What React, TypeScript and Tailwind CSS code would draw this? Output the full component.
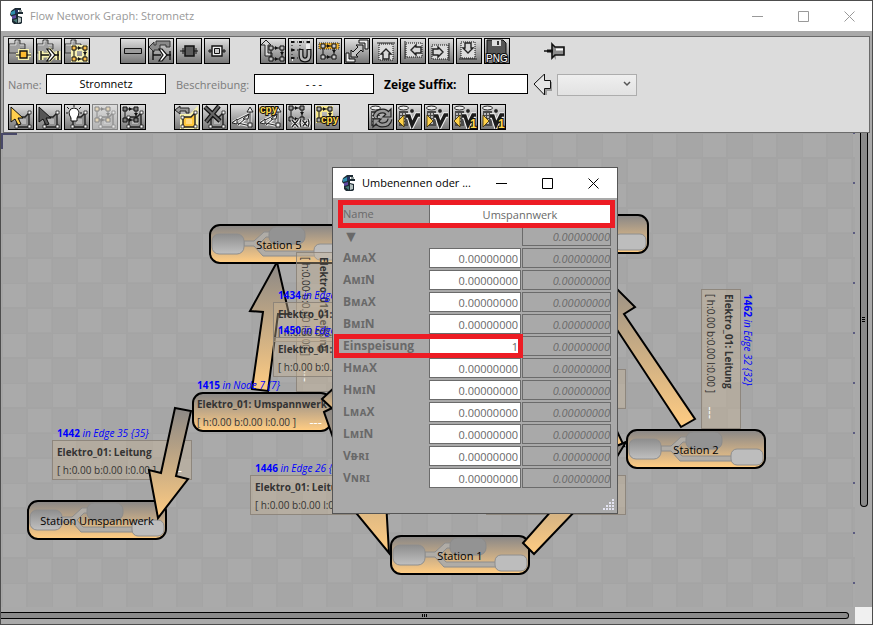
import React from "react";

const ink = "#111";

/* ---------- toolbar glyph parts ---------- */

function Pipe() {
  return (
    <g>
      <path d="M1 6h6V2h5v4h5v5h-5v4H1z" fill="#a0a0a0" stroke="#3c3c3c" />
      <path d="M2 7h6V3h2M12 7h4" fill="none" stroke="#d8d8d8" />
    </g>
  );
}

function Junction({ halo = "none" }: { halo?: string }) {
  const arms = "M5 13v9M5 17h8M18 17h5M22 13v9";
  return (
    <g fill="none">
      <path d={`${arms}M12 11l6 6l-6 6`} stroke={halo} strokeWidth="5" />
      <path d={arms} stroke={ink} strokeWidth="1.4" />
      <path d="M11 11h3l5 6l-5 6h-3l4-6z" fill="#fff" stroke={ink} strokeWidth="1.2" />
    </g>
  );
}

function Squares({ x, y, fill, line = ink, halo = "none" }: { x: number; y: number; fill: string; line?: string; halo?: string }) {
  return (
    <g transform={`translate(${x} ${y})`}>
      <path d="M2 2h11v11H2z" fill="none" stroke={halo} strokeWidth="6" />
      <path d="M2 2h11v11H2z" fill="none" stroke={line} />
      <path d="M6 0l3 2l-3 2zM11 6h4l-2 3zM6 11l3 2l-3 2z" fill={line} />
      <path d="M0 0h4v4H0zM11 0h4v4h-4zM0 11h4v4H0zM11 11h4v4h-4z" fill={fill} stroke={line} />
    </g>
  );
}

function Patch({ fill = "#8f8f8f", halo = "none" }: { fill?: string; halo?: string }) {
  return (
    <g>
      <path d="M9 13h8l4-4v14H9z" fill="none" stroke={halo} strokeWidth="6" />
      <path d="M9 13h8l4-4v14H9z" fill={fill} stroke="#222" strokeWidth="1.4" />
      <path d="M12 15h6v5h-6z" fill="#fff" opacity=".35" />
      <path d="M7 12h3v3H7zM20 7h3v3h-3zM7 21h3v3H7zM20 21h3v3h-3z" fill="#fff" stroke="#222" strokeWidth=".8" />
    </g>
  );
}

function Cursor({ fill }: { fill: string }) {
  return <path d="M3 3v15l4-3l3 6l3-1l-3-6h5z" fill={fill} stroke={ink} />;
}

function Axes() {
  return (
    <g stroke="#222">
      <path d="M20 5v16M3 18l16-8M3 18l18 4M8 21l8-7" fill="none" stroke="#eee" strokeWidth="3" />
      <path d="M20 5v16M3 18l16-8M3 18l18 4M8 21l8-7" fill="none" />
      <path d="M17 8l3-5l3 5zM18 19h4v4h-4zM2 19l5-4v5zM13 15l6-5l-1 5z" fill="#eee" />
    </g>
  );
}

function Copy({ x, y }: { x: number; y: number }) {
  return (
    <text x={x} y={y} fontFamily="Liberation Sans, sans-serif" fontSize="10" fontWeight="700" fill="#ffd94a" stroke={ink} strokeWidth="2" paintOrder="stroke">
      cpy
    </text>
  );
}

function Tower() {
  return (
    <g>
      <path d="M3 7h9v15H3z" fill="#4a4a4a" />
      <path d="M4 10h2M7 10h2M10 10h2M4 13h2M7 13h2M10 13h2M4 16h2M7 16h2M4 19h2M7 19h2" stroke="#ddd" strokeWidth="1.4" />
      <ellipse cx="7.5" cy="4" rx="5" ry="2" fill="#eee" stroke="#222" />
    </g>
  );
}

function Flow({ back = false, one = false }: { back?: boolean; one?: boolean }) {
  const vee = "M10 12h3l3 9l5-10h3";
  return (
    <g>
      <Tower />
      <path d={vee} fill="none" stroke="#f2f2f2" strokeWidth="5.5" />
      <path d={vee} fill="none" stroke="#1c1c1c" strokeWidth="3.4" />
      <circle cx="16" cy="7" r="2.4" fill="#222" stroke="#eee" strokeWidth=".8" />
      <path d={back ? "M8 11v12l-6-6z" : "M3 11v12l6-6z"} fill="#ffd24a" stroke="#3a2c00" strokeWidth=".8" />
      {one && (
        <text x="18" y="24" fontFamily="Liberation Sans, sans-serif" fontSize="12" fontWeight="700" fill="#ffd94a" stroke={ink} strokeWidth="2" paintOrder="stroke">
          1
        </text>
      )}
    </g>
  );
}

function Shift({ angle }: { angle: number }) {
  return (
    <g transform={`rotate(${angle} 13 13)`}>
      <path d="M7 6h14v16H7z" fill="#dcdcdc" stroke="#111" strokeDasharray="1 1" />
      <path d="M5 5h18" stroke="#222" />
      <path d="M14 11l5 5h-2v5h-6v-5H9z" fill="#d8d8d8" stroke="#222" strokeWidth="1.4" />
    </g>
  );
}

type Tool = { name: string; art: React.ReactNode; disabled?: boolean };

const topGroups: Tool[][] = [
  [
    {
      name: "Knoten einfügen",
      art: (
        <g>
          <Pipe />
          <path d="M8 17h15M12 13h7v7h-7z" fill="none" stroke="#f7f2b0" strokeWidth="4" />
          <path d="M8 17h15" stroke={ink} />
          <path d="M12 13h7v7h-7z" fill="#fdbb30" stroke={ink} strokeWidth="1.4" />
        </g>
      ),
    },
    { name: "Kante einfügen", art: <g><Pipe /><Junction halo="#f7f2b0" /></g> },
    { name: "Gruppe einfügen", art: <g><Pipe /><Squares x={8} y={8} fill="#fdc04a" halo="#f7f2b0" /></g> },
  ],
  [
    { name: "Leitung", art: <path d="M4.5 10.5h17v5h-17z" fill="#9c9c9c" stroke={ink} /> },
    {
      name: "Verzweigung",
      art: (
        <g>
          <path d="M1 9l5-5v3h2V3h14v6h-4V7h-6v5H6v2z" fill="#8a8a8a" stroke="#333" />
          <Junction />
        </g>
      ),
    },
    {
      name: "Station",
      art: (
        <g stroke={ink}>
          <path d="M4 13h18M7 10v6M20 10v6" />
          <path d="M9 8h9v10H9z" fill="#5c5c5c" strokeWidth="1.5" />
        </g>
      ),
    },
    {
      name: "Anschluss",
      art: (
        <g stroke={ink}>
          <path d="M4 13h18M6 11v4M20 11v4" />
          <path d="M8 8h10v10H8z" fill="#eee" strokeWidth="1.4" />
          <path d="M10.5 10.500h5v5h-5z" fill="#ccc" />
        </g>
      ),
    },
  ],
  [
    {
      name: "Anordnen",
      art: (
        <g>
          <path d="M6 2l5 5H8v8h4v3H5V7H1z" fill="#d6d6d6" stroke="#222" />
          <Squares x={9} y={8} fill="#bbb" />
        </g>
      ),
    },
    {
      name: "Am Raster ausrichten",
      art: (
        <g>
          <path d="M4 3h1M12 3h1M20 3h1M4 12h1M4 21h1M12 12h1M20 6v5" stroke="#eee" strokeWidth="4" />
          <path d="M3 4h3M11 4h3M19 4h3M3 12h3M3 20h3" stroke={ink} strokeWidth="2" />
          <path d="M6 4h14M6 12h6M4 4v16M12 4v8M6 20h6" stroke={ink} strokeDasharray="1 2" />
          <path d="M13 11v6q0 5 4 5t4-5v-6" fill="none" stroke={ink} strokeWidth="5" />
          <path d="M13 12v5q0 5 4 5t4-5v-5" fill="none" stroke="#b9b9b9" strokeWidth="2.5" />
        </g>
      ),
    },
    {
      name: "Reihe markieren",
      art: (
        <g>
          <path d="M3 5h20v6H3z" fill="#f3b32c" stroke="#222" strokeDasharray="1 1" />
          <Squares x={5} y={6} fill="#ccc" />
        </g>
      ),
    },
    {
      name: "Einpassen",
      art: (
        <g stroke={ink}>
          <path d="M15 2h9v9h-3V5h-6zM2 15v9h9v-3H5v-6z" fill="#eee" />
          <path d="M19 7v7l-2-2l-5 5l2 2H7v-7l2 2l5-5l-2-2z" fill="#c4c4c4" />
        </g>
      ),
    },
    { name: "Nach oben", art: <Shift angle={0} /> },
    { name: "Nach links", art: <Shift angle={-90} /> },
    { name: "Nach rechts", art: <Shift angle={90} /> },
    { name: "Nach unten", art: <Shift angle={180} /> },
    {
      name: "Als PNG speichern",
      art: (
        <g>
          <path d="M3 2h16l3 3v12H3z" fill="#555" stroke={ink} />
          <path d="M8 2h9v6H8z" fill="#ddd" />
          <path d="M13 3h2v4h-2z" fill="#333" />
          <text x="2" y="24" fontFamily="Liberation Sans, sans-serif" fontSize="10" fontWeight="400" fill="#fff" stroke={ink} strokeWidth="2" paintOrder="stroke">
            PNG
          </text>
        </g>
      ),
    },
  ],
];

const bottomGroups: Tool[][] = [
  [
    { name: "Auswählen", art: <g><Patch /><Cursor fill="#ffcf4d" /></g> },
    { name: "Bereich auswählen", art: <g><Patch /><Cursor fill="#555" /></g> },
    {
      name: "Hervorheben",
      art: (
        <g>
          <Patch />
          <path d="M3 3l2 2M10 1v2M17 3l-2 2M2 9h2M16 9h2" stroke={ink} />
          <path d="M7 14q-2-3-2-6q1-4 5-4t5 4q0 3-2 6v3H7z" fill="#fff" stroke={ink} />
        </g>
      ),
    },
    { name: "Gruppe auswählen", disabled: true, art: <g><Patch /><Squares x={3} y={3} fill="#eecb85" /></g> },
    { name: "Gruppe auflösen", art: <g><Patch /><Squares x={3} y={3} fill="#777" /></g> },
  ],
  [
    {
      name: "Eigenschaften",
      art: (
        <g>
          <Patch fill="#ffc83c" halo="#f7f2b0" />
          <path d="M1 6l5-4v2h9v5h-3V7H6v3z" fill="#999" stroke="#222" />
        </g>
      ),
    },
    {
      name: "Löschen",
      art: (
        <g>
          <Patch />
          <path d="M3 3l15 14M17 2L4 18" stroke={ink} strokeWidth="4.5" />
          <path d="M3 3l15 14M17 2L4 18" stroke="#666" strokeWidth="2" />
        </g>
      ),
    },
    { name: "Maße", art: <Axes /> },
    { name: "Maße kopieren", art: <g><Axes /><Copy x={2} y={9} /></g> },
    {
      name: "Variablen",
      art: (
        <g>
          <Squares x={3} y={2} fill="#999" />
          <path d="M6 16l6 7M12 16l-6 7M15 15q-2 4 0 8M22 15q2 4 0 8M17 17l4 5M21 17l-4 5" fill="none" stroke="#fff" strokeWidth="3" />
          <path d="M6 16l6 7M12 16l-6 7M15 15q-2 4 0 8M22 15q2 4 0 8M17 17l4 5M21 17l-4 5" fill="none" stroke="#222" strokeWidth="1.3" />
        </g>
      ),
    },
    { name: "Variablen kopieren", art: <g><Squares x={3} y={3} fill="#aaa" halo="#f7e98e" /><Copy x={7} y={19} /></g> },
  ],
  [
    {
      name: "Neu berechnen",
      art: (
        <g>
          <Tower />
          <path d="M7 13q1-6 8-6q3 0 5 3M22 15q-1 6-8 6q-3 0-5-3" fill="none" stroke="#222" strokeWidth="5" />
          <path d="M23 5v8h-8zM5 23v-8h8z" fill="#999" stroke="#222" strokeWidth="1.2" />
          <path d="M7 13q1-6 8-6q3 0 5 3M22 15q-1 6-8 6q-3 0-5-3" fill="none" stroke="#999" strokeWidth="2.6" />
        </g>
      ),
    },
    { name: "Fluss zurück", art: <Flow back /> },
    { name: "Fluss vor", art: <Flow /> },
    { name: "Ein Schritt zurück", art: <Flow back one /> },
    { name: "Ein Schritt vor", art: <Flow one /> },
  ],
];

function ToolGroup({ tools }: { tools: Tool[] }) {
  return (
    <div className="flex gap-[2px]">
      {tools.map((t) => (
        <button
          key={t.name}
          type="button"
          aria-label={t.name}
          disabled={t.disabled}
          className="relative size-[26px] shrink-0 overflow-hidden border border-black bg-linear-to-b from-[#dedede] to-[#777] disabled:opacity-40"
        >
          <svg viewBox="1 1 24 24" className="block size-full">
            {t.art}
          </svg>
        </button>
      ))}
    </div>
  );
}

function AppIcon() {
  return (
    <svg viewBox="0 0 14 16" className="h-4 w-[14px] shrink-0" aria-hidden="true">
      <path d="M1 3l4-3h6v2H8v2h5v2H8v2l4 1v6l-3 2H5l-3-3V9L0 7z" fill="#1c2a33" />
      <path d="M1 4l4-2v4L1 7z" fill="#2f8fae" />
      <path d="M5 2l3-1v4L5 6z" fill="#24305e" />
      <path d="M2 8l4-1v3l-4 1z" fill="#5e48a0" />
      <path d="M3 12l4-1v4z" fill="#4a7c77" />
      <path d="M8 9l3 1v4l-3 1z" fill="#b4c0c0" />
      <path d="M9 2h3v2H9z" fill="#8f9a9a" />
    </svg>
  );
}

function WindowButtons({ color }: { color: string }) {
  return (
    <div className={`flex items-center gap-[35px] ${color}`}>
      <button type="button" aria-label="Minimieren" className="size-[11px]">
        <svg viewBox="0 0 11 11" className="block size-full"><path d="M0 5.5h11" stroke="currentColor" /></svg>
      </button>
      <button type="button" aria-label="Maximieren" className="size-[11px]">
        <svg viewBox="0 0 11 11" className="block size-full"><path d="M.5.5h10v10H.5z" fill="none" stroke="currentColor" /></svg>
      </button>
      <button type="button" aria-label="Schließen" className="size-[11px]">
        <svg viewBox="0 0 11 11" className="block size-full"><path d="M.5.5l10 10M10.5.5l-10 10" stroke="currentColor" /></svg>
      </button>
    </div>
  );
}

/* ---------- graph ---------- */

const stations = [
  { name: "Station 5", x: 208, y: 91 },
  { name: "", x: 508, y: 81 },
  { name: "Station 2", x: 625, y: 296 },
  { name: "Station 1", x: 389, y: 402 },
  { name: "Station Umspannwerk", x: 26, y: 367 },
];

function StationNode({ name, x, y }: { name: string; x: number; y: number }) {
  return (
    <div
      style={{ left: x, top: y }}
      className="absolute flex h-10 w-[140px] items-center justify-center rounded-[11px] border-2 border-black bg-linear-to-b from-[#8b8886] to-[#ffcc82]"
    >
      <svg viewBox="2 2 136 36" className="absolute inset-0 size-full" aria-hidden="true">
        <defs>
          <linearGradient id="tank" x1="0" y1="0" x2="0" y2="1">
            <stop offset="0" stopColor="#8e8e8e" />
            <stop offset="1" stopColor="#c0c0c0" />
          </linearGradient>
        </defs>
        <path d="M35 17h10l10-9h7v5h-5l-7 7l6 7h50v5H54L45 22H35z" fill="#b0aca6" stroke="#8c8c8c" />
        <rect x="60" y="3" width="36" height="17" rx="7" fill="#939393" stroke="#8b8b8b" />
        <rect x="3" y="10" width="32" height="20" rx="7" fill="url(#tank)" stroke="#8e8e8e" />
        <rect x="105" y="20" width="32" height="16" rx="6" fill="#bdbdbd" stroke="#8e8e8e" />
      </svg>
      <span className="relative pt-px text-[11px] leading-4 whitespace-nowrap text-black">{name}</span>
    </div>
  );
}

type TagData = { id: string; place: string; kind: string; x: number; y: number; node?: boolean; upright?: boolean };

const tags: TagData[] = [
  { id: "", place: "", kind: "Elektro_01: Leitung", x: 295, y: 119, upright: true },
  { id: "1434", place: "in Edge 29 {29}", kind: "Elektro_01: Leitung", x: 272, y: 169 },
  { id: "1450", place: "in Edge 30 {30}", kind: "Elektro_01: Leitung", x: 272, y: 204 },
  { id: "1415", place: "in Node 7 {7}", kind: "Elektro_01: Umspannwerk", x: 191, y: 259, node: true },
  { id: "1446", place: "in Edge 26 {26}", kind: "Elektro_01: Leitung", x: 249, y: 342 },
  { id: "", place: "", kind: "Elektro_01: Leitung", x: 485, y: 342 },
  { id: "", place: "", kind: "Elektro_01: Leitung", x: 485, y: 236 },
  { id: "1462", place: "in Edge 32 {32}", kind: "Elektro_01: Leitung", x: 700, y: 156, upright: true },
];

const leaf: TagData = { id: "1442", place: "in Edge 35 {35}", kind: "Elektro_01: Leitung", x: 51, y: 307 };

function Tag({ id, place, kind, x, y, node, upright }: TagData) {
  const skin = node
    ? "rounded-[11px] border-2 border-black bg-linear-to-b from-[#8b8886] to-[#ffcc82] px-[3px]"
    : "border border-[#857d74]/80 bg-[#c8b496]/40 px-1";
  const turn = upright ? "origin-top-left translate-x-10 rotate-90" : "";
  return (
    <div style={{ left: x, top: y }} className={`absolute h-10 w-[140px] text-[10px] leading-[14px] whitespace-nowrap text-[#333] ${turn}`}>
      <div className={`flex size-full flex-col justify-center gap-1 pt-[2px] ${skin}`}>
        <b>{kind}</b>
        <div className="flex justify-between pr-[5px]">
          <span>[ h:0.00 b:0.00 l:0.00 ]</span>
          <span className="text-[13px] text-white">---</span>
        </div>
      </div>
      <div className="absolute -top-[14px] left-[5px] text-[#0000ff]">
        <b>{id}</b> <i>{place}</i>
      </div>
    </div>
  );
}

function Arrows({ paths }: { paths: string[] }) {
  return (
    <svg className="pointer-events-none absolute inset-0 size-full" aria-hidden="true">
      <defs>
        <linearGradient id="beam" x1="0" y1="0" x2="0" y2="1">
          <stop offset="0" stopColor="#8b8886" />
          <stop offset="1" stopColor="#ffcc82" />
        </linearGradient>
      </defs>
      <g transform="translate(-1 -133)" fill="url(#beam)" stroke="#000" strokeWidth="2">
        {paths.map((d) => (
          <path key={d} d={d} />
        ))}
      </g>
    </svg>
  );
}

function Grid() {
  return (
    <svg className="absolute inset-0 size-full" aria-hidden="true">
      <defs>
        <pattern id="tiles" width="50" height="50" patternUnits="userSpaceOnUse" x="1" y="0">
          <rect width="50" height="50" fill="#a6a6a6" />
          <rect x="1" y="1" width="23" height="23" fill="#aaaaaa" />
          <rect x="26" y="26" width="23" height="23" fill="#aaaaaa" />
          <path d="M0 0h50M0 25h50M0 0v50M25 0v50" stroke="#a4a4a4" strokeWidth="2" />
        </pattern>
        <pattern id="marks" width="50" height="50" patternUnits="userSpaceOnUse" x="852" y="-1">
          <rect width="2" height="2" fill="#5b5b80" />
        </pattern>
      </defs>
      <rect width="100%" height="100%" fill="url(#tiles)" />
      <rect x="852" width="2" height="100%" fill="url(#marks)" />
      <path d="M0 1h16M1 0v16" stroke="#484868" strokeWidth="2" />
    </svg>
  );
}

/* ---------- dialog ---------- */

const rows = [
  ["AᴍᴀX", "0.00000000"],
  ["AᴍɪN", "0.00000000"],
  ["BᴍᴀX", "0.00000000"],
  ["BᴍɪN", "0.00000000"],
  ["Einspeisung", "1"],
  ["HᴍᴀX", "0.00000000"],
  ["HᴍɪN", "0.00000000"],
  ["LᴍᴀX", "0.00000000"],
  ["LᴍɪN", "0.00000000"],
  ["Vᴃʀɪ", "0.00000000"],
  ["Vɴʀɪ", "0.00000000"],
];

const derived = "h-5 w-[89px] border border-[#6b6b6b] bg-transparent text-right italic text-[#6b6b6b]";

function RenameDialog() {
  return (
    <section role="dialog" aria-label="Umbenennen oder ..." className="absolute top-[166px] left-[331px] w-[286px] border border-[#555] bg-[#a9a9a9] text-[#696969]">
      <header className="flex h-[30px] items-center justify-between bg-white pr-[18px] pl-[9px] text-black">
        <div className="flex items-center gap-[6px]">
          <AppIcon />
          <h2>Umbenennen oder ...</h2>
        </div>
        <WindowButtons color="text-black" />
      </header>
      <form className="flex h-[315px] flex-col gap-[2px] pt-[6px] pr-[6px] pl-[10px]">
        <div className="flex h-5 items-center">
          <label htmlFor="entry-name" className="w-[86px]">Name</label>
          <input id="entry-name" defaultValue="Umspannwerk" className="h-5 min-w-0 flex-1 border border-[#6b6b6b] bg-white text-center" />
        </div>
        <div className="flex h-5 items-center justify-between">
          <button type="button" aria-label="Liste einklappen" className="text-[16px] leading-5">▼</button>
          <input aria-label="Summe" readOnly defaultValue="0.00000000" className={derived} />
        </div>
        {rows.map(([label, value]) => (
          <div key={label} className="flex h-5 items-center">
            <label htmlFor={label} className="w-[86px] text-[12px] font-bold">{label}</label>
            <input id={label} defaultValue={value} className="mr-px h-5 w-[92px] border border-[#6b6b6b] bg-white pr-[2px] text-right" />
            <input aria-label={`${label} berechnet`} readOnly defaultValue="0.00000000" className={derived} />
          </div>
        ))}
      </form>
      <svg viewBox="0 0 12 12" className="absolute right-[2px] bottom-[2px] size-3" aria-hidden="true">
        <path d="M9 0h2v2H9zM9 3h2v2H9zM6 3h2v2H6zM9 6h2v2H9zM6 6h2v2H6zM3 6h2v2H3zM9 9h2v2H9zM6 9h2v2H6zM3 9h2v2H3zM0 9h2v2H0z" fill="#e4e4f2" />
      </svg>
      <div className="pointer-events-none absolute top-[32px] left-[5px] h-7 w-[277px] border-[5px] border-[#ed1c24]" />
      <div className="pointer-events-none absolute top-[166px] left-px h-6 w-[189px] border-[5px] border-[#ed1c24]" />
    </section>
  );
}

const field = "h-5 border border-black bg-white px-1 text-center text-black";

export default function App() {
  return (
    <main className="relative flex h-screen flex-col overflow-hidden border border-[#4d4d4d] bg-[#a9a9a9] font-['Open_Sans','Noto_Sans',sans-serif] text-[11px] leading-4">
      <header className="flex h-[30px] shrink-0 items-center justify-between bg-white pr-[17px] pl-[9px] text-[#999]">
        <div className="flex items-center gap-[6px]">
          <AppIcon />
          <h1>Flow Network Graph: Stromnetz</h1>
        </div>
        <WindowButtons color="text-[#999]" />
      </header>

      <div className="shrink-0 pt-[5px] pr-[2px] pl-[2px]">
        <div className="border border-[#6b6b6b] bg-[#dcdcdc] pt-px pb-[2px] pl-1">
          <div className="flex gap-[30px]">
            {topGroups.map((g) => (
              <ToolGroup key={g[0].name} tools={g} />
            ))}
            <button type="button" aria-label="Anheften" className="ml-1 h-[26px] w-[22px]">
              <svg viewBox="0 0 22 26" className="block size-full">
                <path d="M6 14l6 8v-6z" fill="#999" />
                <path d="M0 13h7M8 6l3 3h9v8h-9l-3 3V6z" fill="#8c8c8c" stroke={ink} strokeWidth="1.6" />
                <path d="M12 11.5h7" stroke="#fff" strokeWidth="2" />
                <path d="M3 13h6" stroke={ink} strokeWidth="3" />
              </svg>
            </button>
          </div>
          <div className="mt-[10px] flex items-start leading-[22px] text-[#7b7b7b]">
            <label htmlFor="net-name" className="w-[38px] whitespace-nowrap">Name:</label>
            <input id="net-name" defaultValue="Stromnetz" className={`${field} w-[120px]`} />
            <label htmlFor="net-desc" className="ml-[10px] w-[78px] whitespace-nowrap">Beschreibung:</label>
            <input id="net-desc" defaultValue="- - -" className={`${field} w-[120px]`} />
            <label htmlFor="suffix" className="ml-[10px] w-[84px] text-[12px] font-bold whitespace-nowrap text-black">Zeige Suffix:</label>
            <input id="suffix" className={`${field} w-[60px]`} />
            <button type="button" aria-label="Suffix übernehmen" className="ml-[5px] h-[22px] w-[19px]">
              <svg viewBox="0 0 19 22" className="block size-full">
                <path d="M13 21v-5h6V8" fill="none" stroke="#999" strokeWidth="2" />
                <path d="M1 10L11.500 0v6.500h6v8h-6V21z" fill="#e6e6e6" stroke={ink} />
              </svg>
            </button>
            <div className="relative ml-[5px]">
              <select aria-label="Suffix" className="block h-[22px] w-[80px] appearance-none border border-[#adadad] bg-linear-to-b from-[#efefef] to-[#e2e2e2]">
                <option value=""></option>
              </select>
              <svg viewBox="0 0 8 6" className="pointer-events-none absolute top-[7px] right-[6px] h-[6px] w-2" aria-hidden="true">
                <path d="M1 1l3 3l3-3" fill="none" stroke="#555" strokeWidth="1.5" />
              </svg>
            </div>
          </div>
          <div className="mt-2 flex gap-[28px]">
            {bottomGroups.map((g) => (
              <ToolGroup key={g[0].name} tools={g} />
            ))}
          </div>
        </div>
      </div>

      <div className="flex min-h-0 flex-1">
        <div className="relative min-w-0 flex-1 overflow-hidden">
          <Grid />
          <Arrows
            paths={[
              "M681 427L695 419L624 314L635 307L590 262L597 325L612 322z",
              "M252 389L268 391L278 314L289 314L277 262L250 311L263 312z",
              "M600 395L624 446L560 440z",
            ]}
          />
          {stations.map((s) => (
            <StationNode key={`${s.x}`} {...s} />
          ))}
          {tags.map((t) => (
            <Tag key={`${t.x}-${t.y}`} {...t} />
          ))}
          <Tag {...leaf} />
          <Arrows
            paths={[
              "M175 408L191 411L176 476L188 479L158 518L149 470L161 473z",
              "M324 412L338 405L382 484L385 484L389 553L334 486L350 486z",
              "M322 399L336 386L346 410L338 414z",
              "M523 543L534 554L600 485L626 442L560 470L568 492z",
            ]}
          />
        </div>
        <div className="flex w-[17px] justify-center">
          <div className="flex h-[374px] w-2 flex-col items-center justify-center gap-px rounded-b-full border-x-1 border-b border-black bg-[#8a8a8a]">
            <i className="h-px w-[3px] bg-black" />
            <i className="h-px w-[3px] bg-black" />
            <i className="h-px w-[3px] bg-black" />
          </div>
        </div>
      </div>
      <div className="flex h-[17px] shrink-0">
        <div className="min-w-0 flex-1 pt-[5px] pr-[6px]">
          <div className="flex h-[7px] items-center justify-center gap-px rounded-r-full border-y border-r border-black bg-[#8a8a8a]">
            <i className="h-[3px] w-px bg-black" />
            <i className="h-[3px] w-px bg-black" />
            <i className="h-[3px] w-px bg-black" />
          </div>
        </div>
        <div className="w-[17px] bg-[#f0f0f0]" />
      </div>

      <RenameDialog />
    </main>
  );
}
